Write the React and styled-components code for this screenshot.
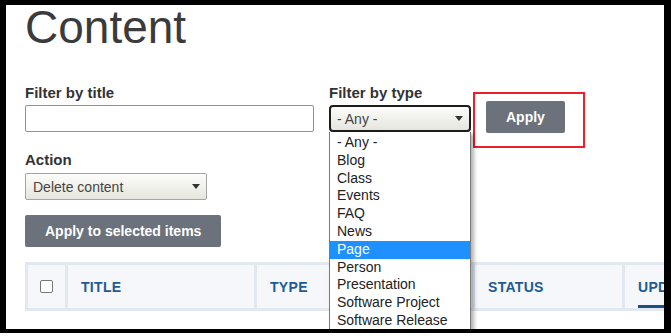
import styled, { createGlobalStyle } from "styled-components"

const GlobalStyle = createGlobalStyle`
html, body {
    margin: 0;
    padding: 0;
    background: #fff;
}
body {
    font-family: "Liberation Sans", Arial, sans-serif;
    color: #333;
}
* {
    box-sizing: border-box;
}
`

const Frame = styled.div`
width: 671px;
height: 333px;
border-style: solid;
border-color: #000;
border-width: 5px 7px 4px 6px;
padding-left: 19px;
overflow: hidden;
background: #fff;
`

const Title = styled.h1`
margin: 2px 0 0;
font-size: 46px;
line-height: 40px;
font-weight: 400;
color: #3b3b3b;
`

const FilterRow = styled.div`
display: flex;
align-items: flex-start;
margin-top: 37px;
`

const Field = styled.div`
display: flex;
flex-direction: column;
margin-left: ${p => p.$offset || 0}px;
`

const Label = styled.label`
font-size: 15px;
line-height: 18px;
font-weight: 700;
color: #333;
margin-bottom: ${p => p.$gap || 3}px;
`

const TextInput = styled.input`
width: 289px;
height: 27px;
border: 1px solid #8e9199;
border-radius: 2px;
background: #fff;
`

const SelectWrap = styled.div`
position: relative;
`

const Select = styled.div`
display: flex;
align-items: center;
justify-content: space-between;
width: ${p => p.$width}px;
height: 27px;
padding: 0 6px 0 ${p => (p.$focused ? 6 : 7)}px;
font-size: 14px;
color: #444;
border: ${p => (p.$focused ? "2px solid #1c1c1c" : "1px solid #a4a4a4")};
border-radius: ${p => (p.$focused ? 4 : 2)}px;
background: linear-gradient(#fcfcfa, #e6e6df);
`

const Arrow = styled.span`
width: 0;
height: 0;
border-left: 4.5px solid transparent;
border-right: 4.5px solid transparent;
border-top: 5px solid #333;
`

const Options = styled.ul`
position: absolute;
top: 100%;
left: 0;
z-index: 5;
width: 142px;
margin: 0;
padding: 2px 0 0;
list-style: none;
background: #fff;
border: 1px solid #7a7a7a;
border-top: none;
box-shadow: 3px 2px 4px rgba(0, 0, 0, 0.3);
`

const Option = styled.li`
height: 17.8px;
line-height: 17.8px;
padding-left: 7px;
font-size: 14px;
white-space: nowrap;
color: ${p => (p.$selected ? "#fff" : "#222")};
background: ${p => (p.$selected ? "#1e90ff" : "transparent")};
`

const Highlight = styled.div`
margin: 8px 0 0 2px;
padding: 7px 18px 13px 11px;
border: 2px solid #e8202a;
`

const Button = styled.button`
height: 32px;
padding: 0 20px;
border: none;
border-radius: 2px;
background: #6b727b;
color: #fff;
font-family: "Liberation Sans", Arial, sans-serif;
font-size: 14px;
font-weight: 700;
margin-top: ${p => p.$top || 0}px;
`

const ActionBlock = styled.div`
display: flex;
flex-direction: column;
align-items: flex-start;
margin-top: 3px;
`

const Table = styled.div`
display: grid;
grid-template-columns: 37px 186px 215px 147px 200px;
gap: 3px;
padding: 3px;
width: 800px;
margin-top: 15px;
background: #e2e8f0;
`

const HeadCell = styled.div`
display: flex;
align-items: center;
justify-content: ${p => (p.$center ? "center" : "flex-start")};
height: 43px;
padding-left: ${p => (p.$center ? 0 : 13)}px;
background: #f5f7fa;
`

const HeadLabel = styled.span`
align-self: ${p => (p.$active ? "stretch" : "auto")};
display: flex;
align-items: center;
padding-top: ${p => (p.$active ? 3 : 0)}px;
border-bottom: ${p => (p.$active ? "3px solid #1b4f82" : "none")};
font-size: 14px;
font-weight: 700;
letter-spacing: 0.3px;
color: #1f5b93;
`

const Checkbox = styled.span`
width: 13px;
height: 13px;
border: 1px solid #767676;
border-radius: 2px;
background: #fff;
`

const types = [
    "- Any -",
    "Blog",
    "Class",
    "Events",
    "FAQ",
    "News",
    "Page",
    "Person",
    "Presentation",
    "Software Project",
    "Software Release",
]

function App() {
    return (
        <>
            <GlobalStyle />
            <Frame>
                <Title>Content</Title>

                <FilterRow>
                    <Field>
                        <Label>Filter by title</Label>
                        <TextInput type="text" />
                    </Field>

                    <Field $offset={15}>
                        <Label>Filter by type</Label>
                        <SelectWrap>
                            <Select $width={142} $focused>
                                <span>- Any -</span>
                                <Arrow />
                            </Select>
                            <Options>
                                {types.map(t => (
                                    <Option key={t} $selected={t === "Page"}>{t}</Option>
                                ))}
                            </Options>
                        </SelectWrap>
                    </Field>

                    <Highlight>
                        <Button>Apply</Button>
                    </Highlight>
                </FilterRow>

                <ActionBlock>
                    <Label $gap={4}>Action</Label>
                    <Select $width={182}>
                        <span>Delete content</span>
                        <Arrow />
                    </Select>
                    <Button $top={15}>Apply to selected items</Button>
                </ActionBlock>

                <Table>
                    <HeadCell $center>
                        <Checkbox />
                    </HeadCell>
                    <HeadCell><HeadLabel>TITLE</HeadLabel></HeadCell>
                    <HeadCell><HeadLabel>TYPE</HeadLabel></HeadCell>
                    <HeadCell><HeadLabel>STATUS</HeadLabel></HeadCell>
                    <HeadCell><HeadLabel $active>UPDATED</HeadLabel></HeadCell>
                </Table>
            </Frame>
        </>
    )
}

export default App
